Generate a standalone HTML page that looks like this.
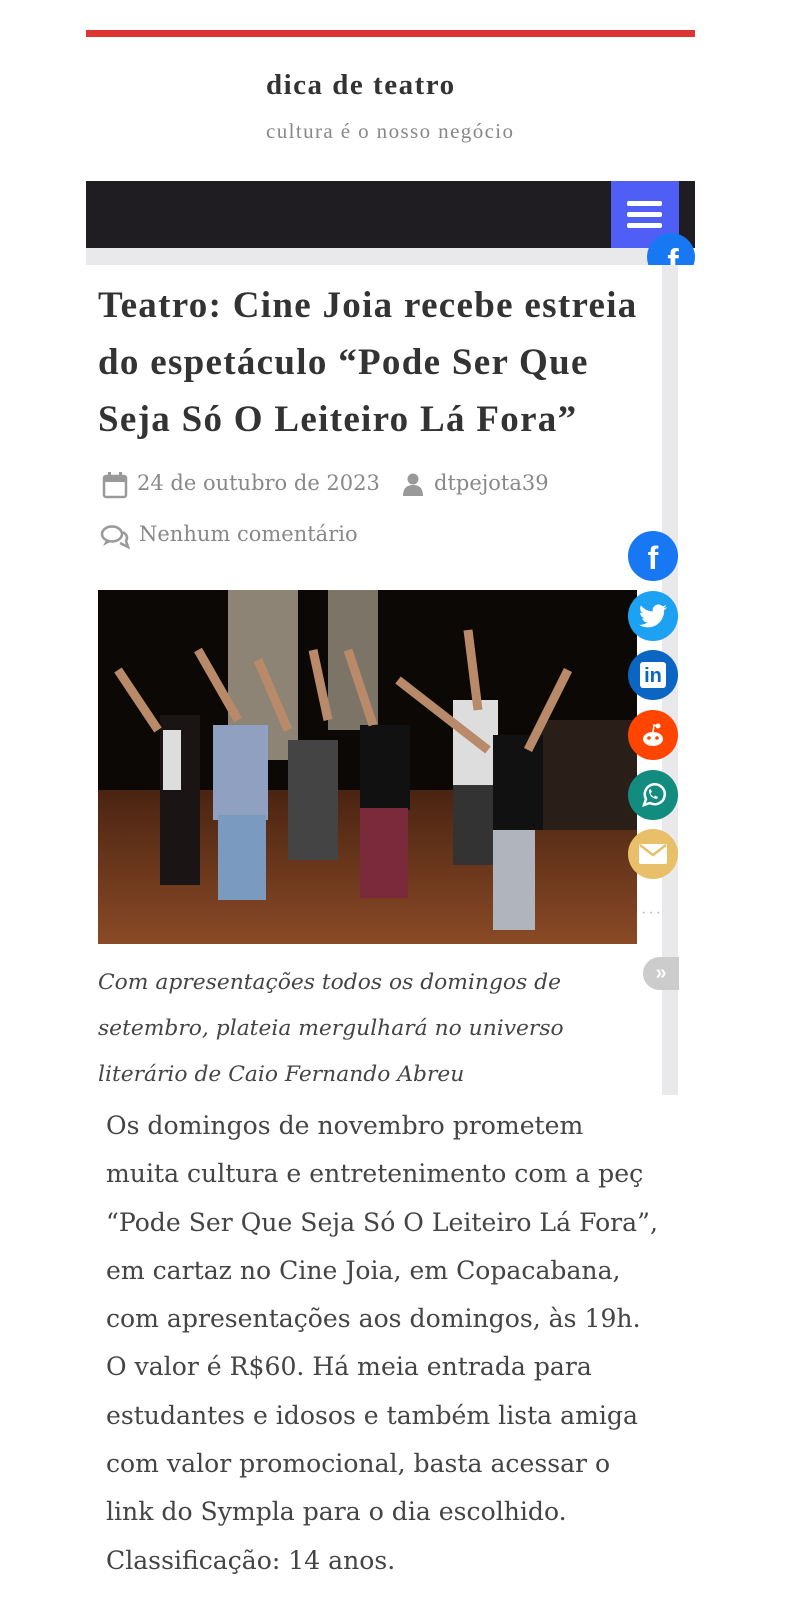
<!DOCTYPE html>
<html><head><meta charset="utf-8"><style>
*{margin:0;padding:0;box-sizing:border-box}
body{width:792px;height:1600px;background:#fff;font-family:"Liberation Serif",serif;position:relative;overflow:hidden;color:#333}
.abs{position:absolute}
.red{left:86px;top:30px;width:609px;height:7px;background:#dd3333}
.site{left:266px;top:69px;font-size:29px;font-weight:bold;color:#333;letter-spacing:1.5px}
.tag{left:266px;top:119px;font-size:21px;color:#888;letter-spacing:1.4px}
.nav{left:86px;top:181px;width:609px;height:67px;background:#201d22}
.menu{left:611px;top:181px;width:68px;height:67px;background:#4f5ff5}
.menu i{position:absolute;left:16px;width:35px;height:5px;background:#fff;border-radius:2px}
.strip{left:86px;top:248px;width:592px;height:17px;background:#e9e9ec}
.rstrip{left:662px;top:265px;width:16px;height:830px;background:#e9e9ec}
h1{position:absolute;left:98px;top:277px;width:600px;font-size:37px;line-height:57px;font-weight:bold;color:#333;letter-spacing:1.3px;white-space:nowrap}
.meta{font-family:"DejaVu Serif",serif;font-size:21px;color:#888}
.cap{left:98px;top:960px;font-family:"DejaVu Serif",serif;font-size:21.8px;line-height:46px;font-style:italic;color:#444;white-space:nowrap}
.body{left:106px;top:1102px;font-family:"DejaVu Serif",serif;font-size:25.1px;line-height:48.3px;color:#444;white-space:nowrap}
.soc{position:absolute;left:628px;width:50px;height:50px;border-radius:50%;display:flex;align-items:center;justify-content:center}
</style></head><body>
<div class="abs red"></div>
<div class="abs site">dica de teatro</div>
<div class="abs tag">cultura é o nosso negócio</div>
<div class="abs nav"></div>
<div class="abs menu"><i style="top:20px"></i><i style="top:31px"></i><i style="top:42px"></i></div>
<div class="abs strip"></div>
<div class="abs rstrip"></div>
<div class="abs" style="left:647px;top:233px;width:48px;height:32px;overflow:hidden"><div style="width:48px;height:48px;border-radius:50%;background:#1877f2;color:#fff;font:bold 34px 'Liberation Sans',sans-serif;text-align:center;line-height:58px;padding-left:4px">f</div></div>
<h1>Teatro: Cine Joia recebe estreia<br>do espetáculo “Pode Ser Que<br>Seja Só O Leiteiro Lá Fora”</h1>
<svg class="abs" style="left:102px;top:471px" width="26" height="28" viewBox="0 0 26 28"><rect x="2" y="5" width="22" height="21" rx="2" fill="none" stroke="#999" stroke-width="2.5"/><rect x="2" y="5" width="22" height="6" fill="#999"/><rect x="6" y="1" width="3" height="7" fill="#999"/><rect x="17" y="1" width="3" height="7" fill="#999"/></svg>
<div class="abs meta" style="left:137px;top:471px">24 de outubro de 2023</div>
<svg class="abs" style="left:402px;top:473px" width="22" height="24" viewBox="0 0 22 24"><circle cx="11" cy="6" r="5.5" fill="#999"/><path d="M1 23 Q1 12 11 12 Q21 12 21 23 Z" fill="#999"/></svg>
<div class="abs meta" style="left:434px;top:471px">dtpejota39</div>
<svg class="abs" style="left:100px;top:524px" width="30" height="26" viewBox="0 0 30 26"><ellipse cx="12" cy="10" rx="10" ry="7.5" fill="none" stroke="#999" stroke-width="2.5"/><path d="M6 16 L3 22 L11 17.5" fill="#999"/><path d="M23 8 Q29 12 26 17 L28 23 L20 19" fill="none" stroke="#999" stroke-width="2.5"/></svg>
<div class="abs meta" style="left:139px;top:522px">Nenhum comentário</div>
<svg class="abs" style="left:98px;top:590px" width="539" height="354" viewBox="0 0 539 354">
<defs><linearGradient id="fl" x1="0" y1="0" x2="0" y2="1"><stop offset="0" stop-color="#4a2412"/><stop offset="1" stop-color="#8a4a26"/></linearGradient></defs>
<rect width="539" height="354" fill="#0c0806"/>
<rect x="0" y="200" width="539" height="154" fill="url(#fl)"/>
<rect x="130" y="0" width="70" height="170" fill="#8e8476"/>
<rect x="230" y="0" width="50" height="140" fill="#7d7468"/>
<rect x="440" y="130" width="99" height="110" fill="#2a1e18"/>
<rect x="62" y="125" width="40" height="170" fill="#1a1414"/>
<rect x="65" y="140" width="18" height="60" fill="#ddd"/>
<rect x="115" y="135" width="55" height="95" fill="#8fa0c0"/>
<rect x="120" y="225" width="48" height="85" fill="#7a9ac0"/>
<rect x="190" y="150" width="50" height="120" fill="#444"/>
<rect x="262" y="135" width="50" height="85" fill="#111"/>
<rect x="262" y="218" width="48" height="90" fill="#7a2a3a"/>
<rect x="355" y="110" width="45" height="90" fill="#ddd"/>
<rect x="355" y="195" width="45" height="80" fill="#333"/>
<rect x="395" y="145" width="50" height="95" fill="#111"/>
<rect x="395" y="240" width="42" height="100" fill="#b0b4bc"/>
<path d="M20 80 L60 140 M100 60 L140 130 M160 70 L190 140 M215 60 L230 130 M250 60 L275 135 M300 90 L390 160 M370 40 L380 120 M470 80 L430 160" stroke="#b88a6a" stroke-width="9"/>
</svg>
<div class="abs cap">Com apresentações todos os domingos de<br>setembro, plateia mergulhará no universo<br>literário de Caio Fernando Abreu</div>
<div class="soc" style="top:531px;background:#1877f2"><span style="color:#fff;font:bold 32px 'Liberation Sans',sans-serif;margin-top:4px">f</span></div>
<div class="soc" style="top:591px;background:#1da1f2"><svg width="28" height="24" viewBox="0 0 24 20"><path d="M24 2.4a9.8 9.8 0 0 1-2.8.8A4.9 4.9 0 0 0 23.3.5a9.8 9.8 0 0 1-3.1 1.2A4.9 4.9 0 0 0 11.8 6.1 14 14 0 0 1 1.7 1a4.9 4.9 0 0 0 1.5 6.6A4.9 4.9 0 0 1 1 7v.1a4.9 4.9 0 0 0 3.9 4.8 4.9 4.9 0 0 1-2.2.1 4.9 4.9 0 0 0 4.6 3.4A9.9 9.9 0 0 1 0 17.5 14 14 0 0 0 7.5 19.7c9.1 0 14-7.5 14-14v-.6A10 10 0 0 0 24 2.4z" fill="#fff"/></svg></div>
<div class="soc" style="top:650px;background:#0a66c2"><div style="width:26px;height:26px;background:#fff;border-radius:3px;color:#0a66c2;font:bold 20px 'Liberation Sans',sans-serif;text-align:center;line-height:28px">in</div></div>
<div class="soc" style="top:710px;background:#ff4500"><svg width="28" height="26" viewBox="0 0 28 26"><ellipse cx="14" cy="17" rx="10" ry="7" fill="#fff"/><circle cx="19" cy="4" r="2.5" fill="#fff"/><path d="M14 10 L15 3 L19 4" stroke="#fff" stroke-width="1.5" fill="none"/><circle cx="10" cy="16" r="1.8" fill="#ff4500"/><circle cx="18" cy="16" r="1.8" fill="#ff4500"/></svg></div>
<div class="soc" style="top:770px;background:#128c7e"><svg width="30" height="30" viewBox="0 0 30 30"><path d="M6 25 L8 19 A10 10 0 1 1 12 23 Z" fill="none" stroke="#fff" stroke-width="2.5"/><path d="M11 10 Q11 18 19 19 L20 17 L17 15.5 L16 17 Q13 15.5 12.5 13 L14 12 L12.5 9 Z" fill="#fff"/></svg></div>
<div class="soc" style="top:829px;background:#e8c06a"><svg width="30" height="22" viewBox="0 0 30 22"><rect x="1" y="1" width="28" height="20" rx="2" fill="#fff"/><path d="M2 2 L15 12 L28 2" stroke="#e8c06a" stroke-width="2.5" fill="none"/></svg></div>
<div class="abs" style="left:641px;top:905px;color:#bbb;font-size:16px;letter-spacing:2px">···</div>
<div class="abs" style="left:643px;top:957px;width:36px;height:33px;border-radius:17px 0 0 17px;background:#ccc;color:#fff;font:bold 20px 'Liberation Sans',sans-serif;line-height:32px;text-align:center">»</div>
<div class="abs body">Os domingos de novembro prometem<br>muita cultura e entretenimento com a peç<br>“Pode Ser Que Seja Só O Leiteiro Lá Fora”,<br>em cartaz no Cine Joia, em Copacabana,<br>com apresentações aos domingos, às 19h.<br>O valor é R$60. Há meia entrada para<br>estudantes e idosos e também lista amiga<br>com valor promocional, basta acessar o<br>link do Sympla para o dia escolhido.<br>Classificação: 14 anos.</div>
<div class="abs" style="left:657px;top:1102px;width:40px;height:500px;background:#fff"></div>
</body></html>
